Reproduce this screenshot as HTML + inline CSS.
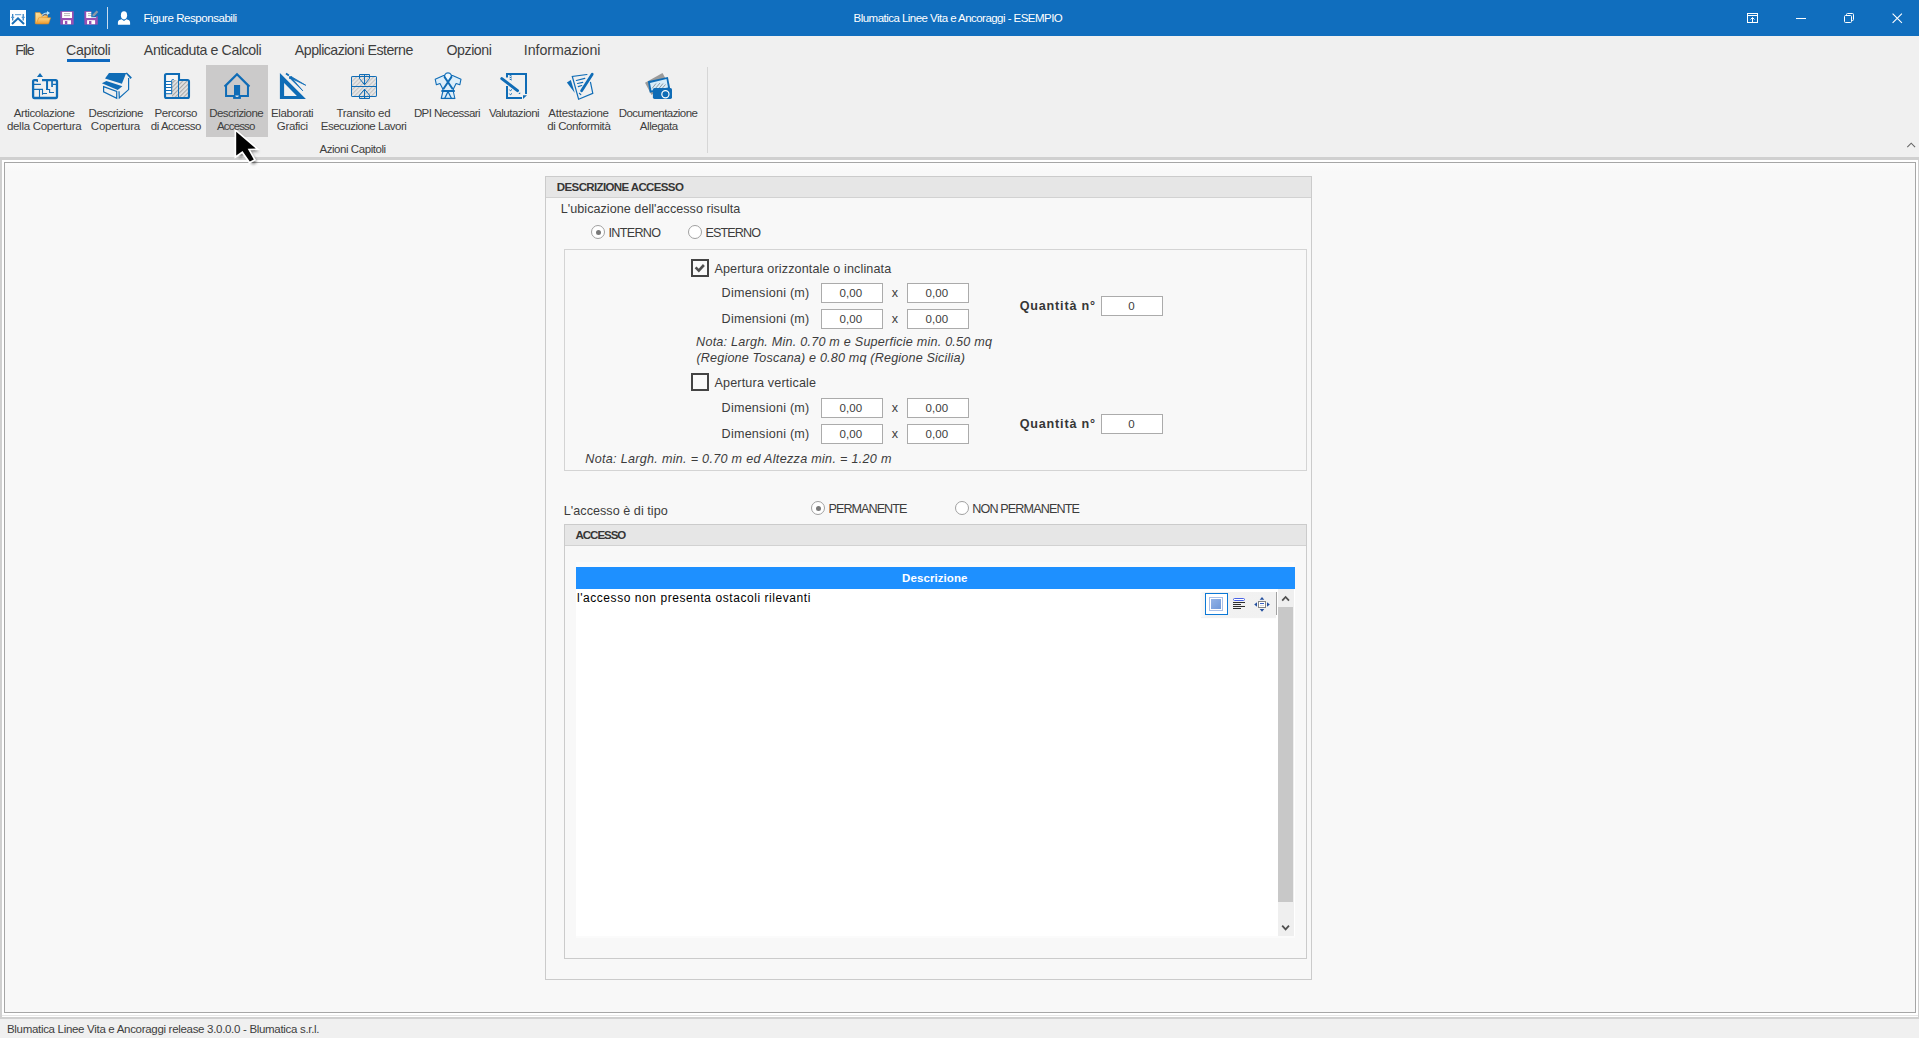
<!DOCTYPE html>
<html lang="it">
<head>
<meta charset="utf-8">
<title>Blumatica Linee Vita e Ancoraggi - ESEMPIO</title>
<style>
html,body{margin:0;padding:0}
body{width:1919px;height:1038px;overflow:hidden;background:#f0f0f0;position:relative;font-family:"Liberation Sans",sans-serif}
.a{position:absolute}
.t{position:absolute;white-space:pre;line-height:20px;height:20px;font-family:"Liberation Sans",sans-serif}
svg{position:absolute;overflow:visible}
.inp{position:absolute;box-sizing:border-box;width:62px;height:20px;background:#fff;border:1px solid #ababab}
.cb{position:absolute;box-sizing:border-box;width:18px;height:18px;border:2px solid #444;background:#fafafa}
.rd{position:absolute;box-sizing:border-box;width:14px;height:14px;border:1px solid #a0a0a0;border-radius:50%;background:#fff}
.rd.on::after{content:"";position:absolute;left:3.5px;top:3.5px;width:5px;height:5px;border-radius:50%;background:#787878}
</style>
</head>
<body>

<!-- title bar -->
<div class="a" style="left:0;top:0;width:1919px;height:36px;background:#106ebe"></div>
<div class="a" style="left:107px;top:7px;width:1px;height:22px;background:#c9dcee"></div>
<!-- outer frame -->
<div class="a" style="left:0;top:157px;width:1919px;height:862px;background:#d0d0d0"></div>
<div class="a" style="left:2px;top:160px;width:1916px;height:857px;background:#fff"></div>
<div class="a" style="left:4px;top:162px;width:1912px;height:851px;box-sizing:border-box;border:1px solid #a6a6a6;background:#f8f8f8"></div>
<div class="a" style="left:2px;top:1015px;width:1916px;height:1px;background:#e6e6e6"></div>
<div class="a" style="left:5px;top:163px;width:1910px;height:8px;background:linear-gradient(#fcfcfc,#f8f8f8)"></div>
<!-- status bar -->
<div class="a" style="left:0;top:1019px;width:1919px;height:19px;background:#f0f0f0"></div>
<!-- ribbon highlight + separator -->
<div class="a" style="left:206px;top:65px;width:62px;height:72px;background:#cbcaca"></div>
<div class="a" style="left:707px;top:67px;width:1px;height:86px;background:#d6d6d6"></div>
<div class="a" style="left:67px;top:59px;width:43px;height:3px;background:#0e69c0"></div>

<!-- icons -->
<svg style="left:0;top:0" width="1919" height="160" viewBox="0 0 1919 160">
<defs>
<pattern id="hz" width="3" height="3" patternUnits="userSpaceOnUse" patternTransform="rotate(-45)"><rect width="3" height="3" fill="#e2e2e2"/><rect width="3" height="1.1" fill="#a9a9a9"/></pattern>
<linearGradient id="fg" x1="0" y1="0" x2="1" y2="1"><stop offset="0" stop-color="#ffe9a8"/><stop offset="1" stop-color="#f09a28"/></linearGradient>
<linearGradient id="fg2" x1="0" y1="0" x2="0" y2="1"><stop offset="0" stop-color="#ffd98a"/><stop offset="1" stop-color="#ef9a2c"/></linearGradient>
<pattern id="hz2" width="3" height="3" patternUnits="userSpaceOnUse" patternTransform="rotate(-45)"><rect width="3" height="3" fill="#e6e6e6"/><rect width="3" height="1.1" fill="#c3c3c3"/></pattern>
</defs>
<!-- app icon -->
<rect x="10" y="10" width="16" height="16" fill="#fff"/>
<path d="M12 24 L18 18.3 L24 24" fill="none" stroke="#1a6fb8" stroke-width="2"/>
<path d="M12.7 14 V20.5 M23.2 14 V20.5" stroke="#2a78bd" stroke-width="1.2" fill="none"/>
<path d="M15 14.7 H21.2" stroke="#4f97d2" stroke-width="1" fill="none"/>
<path d="M11.2 17.3 H14.2 M21.7 17.3 H24.7" stroke="#4f97d2" stroke-width="1.2" fill="none"/>
<!-- folder -->
<path d="M35.3 12.6 H40 L41.4 14.4 H47.5 V23.7 H35.3 Z" fill="url(#fg)" stroke="#e08a20" stroke-width=".6"/>
<path d="M38.8 17.8 H50.6 L48.6 23.8 H36.2 Z" fill="url(#fg2)" stroke="#e58f22" stroke-width=".6"/>
<path d="M41.8 15.6 C43 12.8 45.5 12.3 47 12.6 V11 L50 13.1 L47 15.3 V13.9 C45.6 13.7 43.8 14 42.6 15.9 Z" fill="#b5e2fb"/>
<path d="M42.2 16.4 C43.5 14.4 45.4 14.4 46.8 15.2" fill="none" stroke="#1c4fa8" stroke-width=".9"/>
<!-- save -->
<rect x="60.3" y="11.2" width="13.4" height="13.4" fill="#9a50b2"/>
<rect x="62.1" y="11.9" width="9.9" height="6.1" fill="#fff"/>
<path d="M64 13.6 H70 M64 15.6 H70" stroke="#b7b7b7" stroke-width="1"/>
<rect x="63" y="20.2" width="8" height="4" fill="#fff"/>
<rect x="64.9" y="21" width="2.4" height="3.2" fill="#9a50b2"/>
<!-- save as -->
<rect x="84.4" y="11.2" width="13.4" height="13.4" fill="#9a50b2"/>
<rect x="86.2" y="11.9" width="9.9" height="6.1" fill="#fff"/>
<path d="M88 13.6 H92 M88 15.6 H92" stroke="#b7b7b7" stroke-width="1"/>
<rect x="87.1" y="20.2" width="8" height="4" fill="#fff"/>
<rect x="89" y="21" width="2.4" height="3.2" fill="#9a50b2"/>
<path d="M91.3 10.5 H98.5 V16.2 L96.5 16.2 L96.3 17.2 H91.3 Z" fill="#106ebe"/>
<path d="M92.2 16.6 L92.9 14.2 L96.6 10.4 L98.3 12.1 L94.6 15.9 Z" fill="#8e98a6"/>
<!-- person -->
<ellipse cx="124" cy="15.3" rx="3.1" ry="4.1" fill="#fff"/>
<path d="M117.9 24.8 V22.4 C117.9 20.6 119.4 19.8 121.6 19.3 L124 21 L126.4 19.3 C128.6 19.8 130.1 20.6 130.1 22.4 V24.8 Z" fill="#fff"/>
<!-- window buttons -->
<g fill="none" stroke="#fff" stroke-width="1">
<rect x="1747.5" y="13.5" width="10" height="9"/><path d="M1747.5 15.5 H1757.5 M1752.5 22 V17.5 M1750.5 19.5 L1752.5 17.5 L1754.5 19.5"/>
<path d="M1796 18.5 H1806"/>
<rect x="1844.5" y="15.5" width="7" height="7" rx="1"/><path d="M1846.5 15.5 V14.5 Q1846.5 13.5 1847.5 13.5 H1852.5 Q1853.5 13.5 1853.5 14.5 V19.5 Q1853.5 20.5 1852.5 20.5 H1851.5"/>
<path d="M1892.6 13.6 L1901.9 22.9 M1901.9 13.6 L1892.6 22.9" stroke-width="1.1"/>
</g>
<path d="M1907.3 147.1 L1911.2 143.2 L1915.1 147.1" fill="none" stroke="#666" stroke-width="1.1"/>

<!-- ribbon icon 1: articolazione -->
<g fill="none" stroke="#0f6cb6" stroke-width="1.1">
<path d="M40 72.9 L43 76.9 H36.9 Z" fill="#0f6cb6" stroke="none"/>
<path d="M37.8 80.1 H34.5 Q33.1 80.1 33.1 81.5 V96.6 Q33.1 98 34.5 98 H55.6 Q57 98 57 96.6 V81.5 Q57 80.1 55.6 80.1 H42" stroke-width="2.3"/>
<path d="M37.3 80 V82" stroke-width="1.4"/>
<path d="M47.05 81 V89.9" stroke-width="2"/>
<path d="M52.05 81 V86.9" stroke-width="1.7"/>
<path d="M52.9 84.4 H57 M33 84.4 H40.9 M33 89.4 H43" stroke-width="1.2"/>
<path d="M46 89.5 H49.6 V92.5 H54" stroke-width="1.1"/>
<path d="M39.5 90 V98 M42.5 89.4 V94.7 M42.5 93.5 H47"/>
</g>
<!-- icon 2: descrizione copertura -->
<g fill="#0f6cb6" stroke="none">
<path d="M109 73 H126.2 L121.9 83.8 L105 78.4 Z"/>
<path d="M101.9 83.3 L106.4 81 L122.4 86.2 L117.7 89.9 Z"/>
<path d="M125.6 73.2 L126.9 72.6 L131.9 77.6 L130.6 78.9 Z"/>
</g>
<g fill="none" stroke="#0f6cb6" stroke-width="1.2">
<path d="M103.6 86.6 L116.7 91.4 V98.4 L103.6 91.8 Z"/>
<path d="M128.6 78 V89.6 L119.3 98 L119 91.3"/>
</g>
<!-- icon 3: percorso -->
<rect x="166" y="75" width="12" height="6" fill="#f6f6f6"/>
<rect x="166" y="81" width="5.5" height="13" fill="#fff"/>
<rect x="172" y="80" width="6" height="17" fill="url(#hz)"/>
<rect x="179" y="81" width="9" height="16" fill="url(#hz)"/>
<rect x="166" y="94" width="6" height="3" fill="#e6e6e6"/>
<g fill="none" stroke="#0f6cb6">
<path d="M179 79.9 V74 H166.5 Q165 74 165 75.5 V96.5 Q165 98 166.5 98 H187.5 Q189 98 189 96.5 V81.5 Q189 80 187.5 80 H179" stroke-width="2.1"/>
<path d="M178.5 80 V97" stroke-width="1"/>
<path d="M166 81.5 H171.5 M166 84.5 H171.5 M166 87.5 H171.5 M166 90.5 H171.5 M166 93.7 H172" stroke-width="1"/>
<path d="M173.8 79.6 H172.4 Q171.7 79.6 171.7 80.4 V93.9" stroke-width="1"/>
</g>
<!-- icon 4: descrizione accesso (house) -->
<g fill="none" stroke="#0f6cb6" stroke-width="2">
<path d="M224.6 86.6 L237 74.3 L249.4 86.6" stroke-width="2.2"/>
<path d="M226.05 86 V95.9 H247.95 V86"/>
</g>
<rect x="234" y="85" width="6.1" height="10" fill="#0f6cb6"/>
<rect x="233.1" y="95.2" width="7.8" height="3.7" fill="#0f6cb6"/>
<path d="M235.2 95.4 H238.9 Q238.6 97 237 97 Q235.5 97 235.2 95.4 Z" fill="#dfe7ee"/>
<!-- icon 5: elaborati grafici -->
<path d="M279.9 72.9 V99.1 H305.9 Z M284.1 82.9 L296.9 95.95 H284.1 Z" fill="#0f6cb6" fill-rule="evenodd"/>
<path d="M286 73.6 L288.9 75.6" stroke="#0f6cb6" stroke-width="1.8" fill="none"/>
<rect x="289.1" y="76.2" width="2.9" height="2.7" fill="#0f6cb6"/>
<path d="M291.8 76.9 L305.8 85.3 L291.6 78.6 Z M290.3 78.6 L302.8 90.8 L291.9 78.2 Z" fill="#0f6cb6" stroke="#0f6cb6" stroke-width=".8"/>
<!-- icon 6: transito -->
<rect x="351.5" y="76.5" width="25" height="20" fill="url(#hz2)"/>
<path d="M359.5 74.5 H369.5 V78.5 L364.5 84.8 L359.5 78.5 Z M359.5 98.5 H369.5 V95.2 L364.5 89.2 L359.5 95.2 Z" fill="url(#hz2)"/>
<g fill="none" stroke="#0f6cb6" stroke-width="1">
<rect x="351.5" y="76.5" width="25" height="20" rx=".6"/>
<path d="M351.5 86.5 H376.5"/>
<path d="M359.5 74.5 H369.5 V78.5 L364.5 84.8 L359.5 78.5 Z M364.5 74.5 V84.8"/>
<path d="M359.5 98.5 H369.5 V95.2 L364.5 89.2 L359.5 95.2 Z M364.5 98.5 V89.2"/>
</g>
<!-- icon 7: DPI -->
<path d="M443.6 75.6 L435.2 79.2 L436.4 84.8 L440 83.5 L442.7 88.8 L443 91 L441.2 98.5 H454.9 L453.2 91 L453.5 88.8 L456.1 83.5 L459.8 84.8 L461 79.2 L452.6 75.6 Z" fill="#dceefa" stroke="#0f6cb6" stroke-width="1.1" stroke-linejoin="round"/>
<circle cx="448" cy="76" r="3.4" fill="#eef8fe"/><path d="M444.9 78 A3.5 3.5 0 1 1 451.1 78" fill="none" stroke="#0f6cb6" stroke-width="1.2"/>
<g fill="none" stroke="#0f6cb6">
<path d="M444.3 76.6 L452.8 89.3 M451.7 76.6 L443.2 89.3" stroke-width="1.9"/>
<path d="M441.4 91 H454.8" stroke-width="2"/>
<path d="M448 91.5 L444.8 98.3 M448 91.5 L451.4 98.3" stroke-width="1.3"/>
<path d="M441.3 98.4 H454.9" stroke-width="1.3"/>
</g>
<!-- icon 8: valutazioni -->
<g fill="none" stroke="#0f6cb6" stroke-width="2">
<path d="M507 77.5 V74 H526 V94"/>
<path d="M507 86 V98 H522"/>
</g>
<path d="M523 95.3 H527 L523 99 Z" fill="#0f6cb6"/>
<path d="M501.8 78.6 L517.5 90.6" stroke="#0f6cb6" stroke-width="3" fill="none" stroke-linecap="round"/>
<path d="M518.3 93.7 L520.2 92.2 V94.1 Z" fill="#0f6cb6"/>
<path d="M509.6 75.3 L511.8 76.2 M509.6 77.2 L511.8 78.1 M509.6 79.1 L511.8 80 M509.4 89.6 L510.4 90.8 L512 89.4 M509.4 93.6 L510.4 94.8 L512 93.4" fill="none" stroke="#0f6cb6" stroke-width="1"/>
<!-- icon 9: attestazione -->
<path d="M566.9 82.4 L570.8 80 L574.8 93 Z" fill="#0f6cb6"/>
<g fill="none" stroke="#0f6cb6" stroke-width="1.2" stroke-linecap="round">
<path d="M586.9 74.5 L572.3 76.5 L578.6 99.2 L592.8 93.4 L590.5 82.3"/>
<path d="M576.4 80.5 L584.8 78.4 M577.5 83.5 L582.7 82.4 M578.3 86.6 L581.7 85.5 M579.4 93.3 L580.8 94.6"/>
<path d="M592.2 74.2 L581.6 90.8" stroke-width="2.8"/>
</g>
<!-- icon 10: documentazione -->
<path d="M645 82.8 L662.5 73 L668 83 L651.5 95 Z" fill="#9b9b9b"/>
<path d="M647.9 81.2 L667.9 77 L670.1 88.1 L649.8 92.8 Z" fill="#0f6cb6"/>
<path d="M650 82.9 L666.5 79.1 L668 87.4 L651.4 90.6 Z" fill="#d6ecf9"/>
<path d="M652 88.5 L656 83.5 M655 89 L660 83 M658.5 89 L663 83.5 M662 88.5 L665.5 84.5" stroke="#8e9aa3" stroke-width="1" fill="none"/>
<rect x="652.9" y="88" width="19.1" height="10.9" rx="1.6" fill="#0f6cb6"/>
<circle cx="665.4" cy="94.2" r="3.6" fill="#0f6cb6" stroke="#fff" stroke-width="1.2"/>
</svg>
<!-- mouse cursor -->
<svg style="left:228px;top:122px" width="44" height="50" viewBox="228 122 44 50">
<defs><filter id="sh" x="-30%" y="-30%" width="180%" height="180%"><feGaussianBlur stdDeviation="1.7"/></filter></defs>
<path d="M239.2 134.5 V158.5 L245.5 154 L252.8 164.5 L256.8 162.5 L250.7 151.6 L258.8 151.4 Z" fill="#000" opacity=".5" filter="url(#sh)"/>
<path d="M236.2 131.8 V155.5 L242.5 151.1 L249.8 161.5 L253.8 159.5 L247.7 148.8 L255.8 148.4 Z" fill="#000" stroke="#fff" stroke-width="3.4" stroke-linejoin="miter" paint-order="stroke"/>
</svg>

<!-- form -->
<div class="a" style="left:545px;top:176px;width:767px;height:804px;box-sizing:border-box;border:1px solid #cbcbcb"></div>
<div class="a" style="left:546px;top:177px;width:765px;height:20px;background:#e6e6e6;border-bottom:1px solid #d2d2d2"></div>
<div class="a" style="left:564px;top:249px;width:743px;height:222px;box-sizing:border-box;border:1px solid #d4d4d4"></div>
<div class="a" style="left:564px;top:524px;width:743px;height:435px;box-sizing:border-box;border:1px solid #cbcbcb"></div>
<div class="a" style="left:565px;top:525px;width:741px;height:20px;background:#e6e6e6;border-bottom:1px solid #d2d2d2"></div>
<div class="rd on" style="left:591px;top:225px"></div>
<div class="rd" style="left:688px;top:225px"></div>
<div class="rd on" style="left:811px;top:501px"></div>
<div class="rd" style="left:955px;top:501px"></div>
<div class="cb" style="left:691px;top:259px"></div>
<div class="cb" style="left:691px;top:373px"></div>
<svg style="left:691px;top:259px" width="18" height="18"><path d="M4.6 8.4 L7.8 11.6 L12.9 6" fill="none" stroke="#505050" stroke-width="2.6"/></svg>
<div class="inp" style="left:821px;top:283px"></div><div class="inp" style="left:907px;top:283px"></div>
<div class="inp" style="left:821px;top:309px"></div><div class="inp" style="left:907px;top:309px"></div>
<div class="inp" style="left:821px;top:398px"></div><div class="inp" style="left:907px;top:398px"></div>
<div class="inp" style="left:821px;top:424px"></div><div class="inp" style="left:907px;top:424px"></div>
<div class="inp" style="left:1101px;top:296px"></div>
<div class="inp" style="left:1101px;top:414px"></div>
<!-- memo -->
<div class="a" style="left:576px;top:562px;width:719px;height:5px;background:#fbfbfb"></div>
<div class="a" style="left:576px;top:936px;width:719px;height:2px;background:#fbfbfb"></div>
<div class="a" style="left:576px;top:567px;width:719px;height:22px;background:#1e90ff"></div>
<div class="a" style="left:576px;top:589px;width:719px;height:347px;background:#fff"></div>
<div class="a" style="left:1278px;top:589px;width:16px;height:347px;background:#efefef"></div>
<div class="a" style="left:1278px;top:607px;width:15px;height:295px;background:#c8c8c8"></div>
<!-- memo toolbar -->
<div class="a" style="left:1201px;top:592px;width:75px;height:25px;background:linear-gradient(90deg,#fbfbfb 0,#f2f2f2 8%,#f1f1f1 100%);box-shadow:0 1px 1px rgba(0,0,0,.05)"></div>
<div class="a" style="left:1205px;top:593px;width:23px;height:22px;box-sizing:border-box;border:1px solid #0b78d6;background:#fff"></div>
<svg style="left:1200px;top:589px" width="100" height="350" viewBox="1200 589 100 350">
<defs><linearGradient id="sq" x1="0" y1="0" x2="1" y2="1"><stop offset="0" stop-color="#93b3e6"/><stop offset="1" stop-color="#6f98d9"/></linearGradient></defs>
<rect x="1209.5" y="597.5" width="13" height="13" fill="#fff" stroke="#a9c0e8" stroke-width="1"/>
<rect x="1211" y="599" width="10" height="10" fill="url(#sq)"/>
<rect x="1233.5" y="598.5" width="11" height="2" rx="1" fill="#fff" stroke="#4a63e6" stroke-width="1"/>
<path d="M1233 602.5 H1245 M1233 604.5 H1241 M1233 606.5 H1245 M1233 608.5 H1241" stroke="#2e2e2e" stroke-width="1"/>
<rect x="1258.5" y="601.5" width="7" height="6" fill="#fff" stroke="#858585" stroke-width="1"/>
<path d="M1260 603.5 H1264" stroke="#3b62c4" stroke-width="1"/>
<path d="M1260 605.5 H1264" stroke="#d8d8d8" stroke-width="1"/>
<path d="M1262 597 L1264.3 599.8 H1259.7 Z M1262 611.8 L1264.3 609 H1259.7 Z M1254.2 604.5 L1257 602.2 V606.8 Z M1269.8 604.5 L1267 602.2 V606.8 Z" fill="#24509f"/>
<path d="M1276.5 592 V615" stroke="#a2a2a2" stroke-width="1"/>
<path d="M1282.2 600.6 L1285.6 597 L1289 600.6" fill="none" stroke="#505050" stroke-width="1.8"/>
<path d="M1282.2 925.6 L1285.6 929.4 L1289 925.6" fill="none" stroke="#505050" stroke-width="1.8"/>
</svg>

<!-- text -->
<span class="t" style="left:143.53px;top:8.00px;font-size:11.5px;color:#ffffff;letter-spacing:-0.447px">Figure Responsabili</span>
<span class="t" style="left:853.62px;top:8.00px;font-size:11.5px;color:#ffffff;letter-spacing:-0.537px">Blumatica Linee Vita e Ancoraggi - ESEMPIO</span>
<span class="t" style="left:15.30px;top:40.00px;font-size:14.2px;color:#3e3e3e;letter-spacing:-1.210px">File</span>
<span class="t" style="left:66.10px;top:40.00px;font-size:14.2px;color:#3e3e3e;letter-spacing:-0.385px">Capitoli</span>
<span class="t" style="left:143.86px;top:40.00px;font-size:14.2px;color:#3e3e3e;letter-spacing:-0.395px">Anticaduta e Calcoli</span>
<span class="t" style="left:294.86px;top:40.00px;font-size:14.2px;color:#3e3e3e;letter-spacing:-0.531px">Applicazioni Esterne</span>
<span class="t" style="left:446.42px;top:40.00px;font-size:14.2px;color:#3e3e3e;letter-spacing:-0.427px">Opzioni</span>
<span class="t" style="left:523.80px;top:40.00px;font-size:14.2px;color:#3e3e3e;letter-spacing:-0.060px">Informazioni</span>
<span class="t" style="left:13.82px;top:103.00px;font-size:11.5px;color:#3e3e3e;letter-spacing:-0.392px">Articolazione</span>
<span class="t" style="left:6.90px;top:116.00px;font-size:11.5px;color:#3e3e3e;letter-spacing:-0.279px">della Copertura</span>
<span class="t" style="left:88.61px;top:103.00px;font-size:11.5px;color:#3e3e3e;letter-spacing:-0.536px">Descrizione</span>
<span class="t" style="left:90.85px;top:116.00px;font-size:11.5px;color:#3e3e3e;letter-spacing:-0.216px">Copertura</span>
<span class="t" style="left:154.62px;top:103.00px;font-size:11.5px;color:#3e3e3e;letter-spacing:-0.455px">Percorso</span>
<span class="t" style="left:150.85px;top:116.00px;font-size:11.5px;color:#3e3e3e;letter-spacing:-0.485px">di Accesso</span>
<span class="t" style="left:209.26px;top:103.00px;font-size:11.5px;color:#3e3e3e;letter-spacing:-0.570px">Descrizione</span>
<span class="t" style="left:216.98px;top:116.00px;font-size:11.5px;color:#3e3e3e;letter-spacing:-0.836px">Accesso</span>
<span class="t" style="left:270.88px;top:103.00px;font-size:11.5px;color:#3e3e3e;letter-spacing:-0.327px">Elaborati</span>
<span class="t" style="left:276.87px;top:116.00px;font-size:11.5px;color:#3e3e3e;letter-spacing:-0.342px">Grafici</span>
<span class="t" style="left:336.47px;top:103.00px;font-size:11.5px;color:#3e3e3e;letter-spacing:-0.298px">Transito ed</span>
<span class="t" style="left:320.76px;top:116.00px;font-size:11.5px;color:#3e3e3e;letter-spacing:-0.493px">Esecuzione Lavori</span>
<span class="t" style="left:413.89px;top:103.00px;font-size:11.5px;color:#3e3e3e;letter-spacing:-0.562px">DPI Necessari</span>
<span class="t" style="left:488.90px;top:103.00px;font-size:11.5px;color:#3e3e3e;letter-spacing:-0.465px">Valutazioni</span>
<span class="t" style="left:548.30px;top:103.00px;font-size:11.5px;color:#3e3e3e;letter-spacing:-0.241px">Attestazione</span>
<span class="t" style="left:547.21px;top:116.00px;font-size:11.5px;color:#3e3e3e;letter-spacing:-0.401px">di Conformità</span>
<span class="t" style="left:618.75px;top:103.00px;font-size:11.5px;color:#3e3e3e;letter-spacing:-0.546px">Documentazione</span>
<span class="t" style="left:639.84px;top:116.00px;font-size:11.5px;color:#3e3e3e;letter-spacing:-0.459px">Allegata</span>
<span class="t" style="left:319.40px;top:139.00px;font-size:11.5px;color:#3e3e3e;letter-spacing:-0.435px">Azioni Capitoli</span>
<span class="t" style="left:6.99px;top:1019.00px;font-size:11.5px;color:#3e3e3e;letter-spacing:-0.307px">Blumatica Linee Vita e Ancoraggi release 3.0.0.0 - Blumatica s.r.l.</span>
<span class="t" style="left:556.87px;top:177.00px;font-size:11.5px;color:#363636;letter-spacing:-0.625px;font-weight:bold">DESCRIZIONE ACCESSO</span>
<span class="t" style="left:560.79px;top:199.00px;font-size:12.6px;color:#3c3c3c;letter-spacing:0.034px">L&#x27;ubicazione dell&#x27;accesso risulta</span>
<span class="t" style="left:608.58px;top:223.00px;font-size:12.6px;color:#3c3c3c;letter-spacing:-0.721px">INTERNO</span>
<span class="t" style="left:705.57px;top:223.00px;font-size:12.6px;color:#3c3c3c;letter-spacing:-0.904px">ESTERNO</span>
<span class="t" style="left:714.41px;top:259.00px;font-size:12.6px;color:#3c3c3c;letter-spacing:0.126px">Apertura orizzontale o inclinata</span>
<span class="t" style="left:714.41px;top:373.00px;font-size:12.6px;color:#3c3c3c;letter-spacing:0.172px">Apertura verticale</span>
<span class="t" style="left:721.56px;top:283.00px;font-size:12.6px;color:#3c3c3c;letter-spacing:0.234px">Dimensioni (m)</span>
<span class="t" style="left:891.74px;top:283.00px;font-size:12.6px;color:#3c3c3c;letter-spacing:0.000px">x</span>
<span class="t" style="left:839.48px;top:283.00px;font-size:11.5px;color:#3c3c3c;letter-spacing:0.126px">0,00</span>
<span class="t" style="left:925.48px;top:283.00px;font-size:11.5px;color:#3c3c3c;letter-spacing:0.126px">0,00</span>
<span class="t" style="left:721.56px;top:309.00px;font-size:12.6px;color:#3c3c3c;letter-spacing:0.234px">Dimensioni (m)</span>
<span class="t" style="left:891.74px;top:309.00px;font-size:12.6px;color:#3c3c3c;letter-spacing:0.000px">x</span>
<span class="t" style="left:839.48px;top:309.00px;font-size:11.5px;color:#3c3c3c;letter-spacing:0.126px">0,00</span>
<span class="t" style="left:925.48px;top:309.00px;font-size:11.5px;color:#3c3c3c;letter-spacing:0.126px">0,00</span>
<span class="t" style="left:721.56px;top:398.00px;font-size:12.6px;color:#3c3c3c;letter-spacing:0.234px">Dimensioni (m)</span>
<span class="t" style="left:891.74px;top:398.00px;font-size:12.6px;color:#3c3c3c;letter-spacing:0.000px">x</span>
<span class="t" style="left:839.48px;top:398.00px;font-size:11.5px;color:#3c3c3c;letter-spacing:0.126px">0,00</span>
<span class="t" style="left:925.48px;top:398.00px;font-size:11.5px;color:#3c3c3c;letter-spacing:0.126px">0,00</span>
<span class="t" style="left:721.56px;top:424.00px;font-size:12.6px;color:#3c3c3c;letter-spacing:0.234px">Dimensioni (m)</span>
<span class="t" style="left:891.74px;top:424.00px;font-size:12.6px;color:#3c3c3c;letter-spacing:0.000px">x</span>
<span class="t" style="left:839.48px;top:424.00px;font-size:11.5px;color:#3c3c3c;letter-spacing:0.126px">0,00</span>
<span class="t" style="left:925.48px;top:424.00px;font-size:11.5px;color:#3c3c3c;letter-spacing:0.126px">0,00</span>
<span class="t" style="left:696.08px;top:332.00px;font-size:12.6px;color:#3c3c3c;letter-spacing:0.225px;font-style:italic">Nota: Largh. Min. 0.70 m e Superficie min. 0.50 mq</span>
<span class="t" style="left:696.43px;top:348.00px;font-size:12.6px;color:#3c3c3c;letter-spacing:0.177px;font-style:italic">(Regione Toscana) e 0.80 mq (Regione Sicilia)</span>
<span class="t" style="left:585.27px;top:449.00px;font-size:12.6px;color:#3c3c3c;letter-spacing:0.294px;font-style:italic">Nota: Largh. min. = 0.70 m ed Altezza min. = 1.20 m</span>
<span class="t" style="left:1019.75px;top:296.00px;font-size:12.6px;color:#363636;letter-spacing:0.794px;font-weight:bold">Quantità n°</span>
<span class="t" style="left:1019.75px;top:414.00px;font-size:12.6px;color:#363636;letter-spacing:0.794px;font-weight:bold">Quantità n°</span>
<span class="t" style="left:1128.13px;top:296.00px;font-size:11.5px;color:#3c3c3c;letter-spacing:0.000px">0</span>
<span class="t" style="left:1128.13px;top:414.00px;font-size:11.5px;color:#3c3c3c;letter-spacing:0.000px">0</span>
<span class="t" style="left:563.79px;top:501.00px;font-size:12.6px;color:#3c3c3c;letter-spacing:0.038px">L&#x27;accesso è di tipo</span>
<span class="t" style="left:828.54px;top:499.00px;font-size:12.6px;color:#3c3c3c;letter-spacing:-0.957px">PERMANENTE</span>
<span class="t" style="left:972.23px;top:499.00px;font-size:12.6px;color:#3c3c3c;letter-spacing:-0.861px">NON PERMANENTE</span>
<span class="t" style="left:575.59px;top:525.00px;font-size:11.5px;color:#363636;letter-spacing:-1.032px;font-weight:bold">ACCESSO</span>
<span class="t" style="left:902.10px;top:568.00px;font-size:11.5px;color:#ffffff;letter-spacing:0.083px;font-weight:bold">Descrizione</span>
<span class="t" style="left:576.91px;top:588.00px;font-size:12px;color:#000000;letter-spacing:0.560px">l&#x27;accesso non presenta ostacoli rilevanti</span>
</body>
</html>
